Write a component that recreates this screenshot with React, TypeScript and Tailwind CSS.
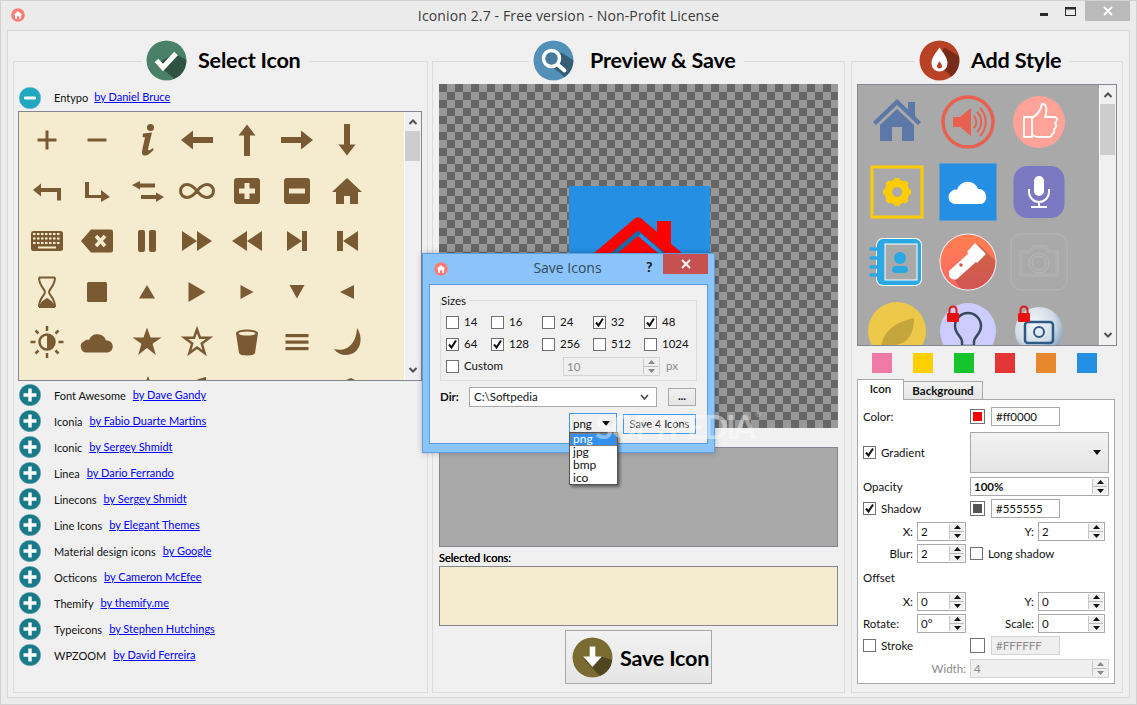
import React from "react";

const B = "#7a5a33";
const C = "#f5ebcf";

function P({ d }: { d: string }) {
  return <path d={d} fill={B} />;
}

const entypo: React.ReactNode[] = [
  <P d="M-1.5 -9.5h3v8h8v3h-8v8h-3v-8h-8v-3h8z" />,
  <P d="M-9.5 -1.5h19v3h-19z" />,
  <g fill={B}><circle cx="3.5" cy="-12.5" r="3.5" /><path d="M-4 -6.5L5 -7.5L1 9Q1 11 3 10L6 8L6.5 10Q1 16 -3 15.5Q-5.5 15 -5 11L-2 -2.5L-4.5 -3z" /></g>,
  <P d="M-16 0L-4 -9.5v6.5h20v6h-20v6.500z" />,
  <P d="M0 -15.500L8.500 -4.500h-5.500v20.500h-6v-20.500h-5.500z" />,
  <P d="M16 0L4 -9.500v6.500h-20v6h20v6.500z" />,
  <P d="M0 15.500L8.500 4.500h-5.500v-20.500h-6v20.500h-5.500z" />,

  <P d="M-14 -1L-6 -7.500v4.500H14V9.500H10V1H-6v4.500z" />,
  <P d="M-12 -9h4V4H4V-1L13 6L4 11V7H-12z" />,
  <g fill={B}><path d="M-15 -6L-7 -10V-7.500H8V-3.500H-7V-1.500z" /><path d="M17 6L9 11V8H-6V4H9V1.500z" /></g>,
  <path d="M0 0C-4 -5 -7 -6.500 -10 -6.500A6.500 6.500 0 0 0 -10 6.500C-7 6.500 -4 5 0 0C4 -5 7 -6.500 10 -6.500A6.500 6.500 0 0 1 10 6.500C7 6.500 4 5 0 0z" fill="none" stroke={B} strokeWidth="3" />,
  <g><rect x="-13" y="-13" width="26" height="26" rx="3" fill={B} /><path d="M-2.500 -8h5v5.500H8v5H2.500V8h-5V2.500H-8v-5h5.500z" fill={C} /></g>,
  <g><rect x="-13" y="-13" width="26" height="26" rx="3" fill={B} /><path d="M-8 -2.500H8v5H-8z" fill={C} /></g>,
  <P d="M0 -13L15 1H11V13H3V5H-3V13H-11V1H-15z" />,

  <g><rect x="-16" y="-10" width="32" height="20" rx="2.500" fill={B} /><path d="M-14 -7h28M-14 -2.500h28M-14 2h28" stroke={C} strokeWidth="2" strokeDasharray="2.500 1.500" /><path d="M-9 6.500h18" stroke={C} strokeWidth="2" /></g>,
  <g><path d="M-16 0L-6 -11.500H14a2 2 0 0 1 2 2V9.500a2 2 0 0 1 -2 2H-6z" fill={B} /><path d="M-1 -5L8 5M8 -5L-1 5" stroke={C} strokeWidth="3.500" /></g>,
  <g fill={B}><rect x="-9" y="-11" width="7" height="22" rx="2" /><rect x="2" y="-11" width="7" height="22" rx="2" /></g>,
  <P d="M-15 -10L0 0L-15 10zM0 -10L15 0L0 10z" />,
  <P d="M15 -10L0 0L15 10zM0 -10L-15 0L0 10z" />,
  <P d="M-10 -10L5 0L-10 10zM5 -10h5v20h-5z" />,
  <P d="M11 -10L-4 0L11 10zM-4 -10h-6v20h6z" />,

  <g><path d="M-8 -14.500H8M-8 15H8M-8 -14.500C-8 -6 -2 -3 -2 0C-2 3 -8 6 -8 15M8 -14.500C8 -6 2 -3 2 0C2 3 8 6 8 15" fill="none" stroke={B} strokeWidth="2" /><path d="M-8 15C-7 10 -2 7 0 6C2 7 7 10 8 15z" fill={B} /></g>,
  <rect x="-10" y="-10" width="20" height="20" rx="1.500" fill={B} />,
  <P d="M0 -7L8 6.500H-8z" />,
  <P d="M-8.500 -10L8.500 0L-8.500 10z" />,
  <P d="M-6.500 -7L6.500 0L-6.500 7z" />,
  <P d="M-7.500 -7H7.500L0 6.500z" />,
  <P d="M7 -7V7L-7 0z" />,

  <g fill={B}><circle cx="0" cy="0" r="7.500" fill="none" stroke={B} strokeWidth="2.500" /><path d="M0 -7.500A7.500 7.500 0 0 0 0 7.500z" transform="scale(-1 1)" /><path d="M0 -16V-11M0 11V16M-16.500 0H-11.500M11.500 0H16.500M-11.500 -11.500L-8.500 -8.500M8.500 8.500L11.500 11.500M11.500 -11.500L8.500 -8.500M-8.500 8.500L-11.500 11.500" stroke={B} strokeWidth="2.500" /></g>,
  <P d="M-9.500 10.500a6 6 0 0 1 -3 -11.500c1 -1 3 -1.500 4.500 -1a9 9 0 0 1 17 0.500a6 6 0 0 1 1.500 12z" />,
  <polygon fill={B} points="0,-14.500 3.500,-4.600 14.500,-4.600 5.600,1.800 8.800,13 0,6 -8.800,13 -5.600,1.800 -14.500,-4.600 -3.500,-4.600" />,
  <polygon fill="none" stroke={B} strokeWidth="2.500" points="0,-12.500 3,-4.200 12.500,-4.200 4.800,1.500 7.600,11 0,5.500 -7.600,11 -4.800,1.500 -12.500,-4.200 -3,-4.200" />,
  <g><path d="M-11 -9L-8 11Q-7 13.500 0 13.500Q7 13.500 8 11L11 -9z" fill={B} /><ellipse cx="0" cy="-9" rx="11" ry="3.500" fill={B} /><ellipse cx="0" cy="-8.500" rx="8.500" ry="2" fill={C} /></g>,
  <g fill={B}><rect x="-11.500" y="-8" width="23" height="3.200" /><rect x="-11.500" y="-1.500" width="23" height="3.200" /><rect x="-11.500" y="5" width="23" height="3.200" /></g>,
  <P d="M10 -14C18 -2 12 13 -1 13C-6 13 -10 11 -13 7C-3 10 9 5 10 -14z" />,

  <span />,
  <span />,
  <P d="M1 -17l2 5h-4z" />,
  <P d="M-3 -12q6 -3 12 -4v5h-12z" />,
  <span />,
  <P d="M-10 -11q5 -3 10 0v2h-10z" />,
  <P d="M-7 -12l6 -1l5 -2l6 3v4h-17z" />,
];

function Scrollbar({ thumbTop, thumbH }: { thumbTop: number; thumbH: number }) {
  return (
    <div className="w-[17px] shrink-0 self-stretch bg-[#f0f0f0] flex flex-col items-center border-l border-white">
      <svg width="16" height="19" viewBox="0 0 16 19" className="shrink-0">
        <path d="M4.500 12L8 8.500L11.500 12" fill="none" stroke="#505050" strokeWidth="2" />
      </svg>
      <div className="flex-1 w-full">
        <div className="w-[15px] bg-[#cdcdcd]" style={{ marginTop: thumbTop, height: thumbH }} />
      </div>
      <svg width="16" height="19" viewBox="0 0 16 19" className="shrink-0">
        <path d="M4.500 7L8 10.500L11.500 7" fill="none" stroke="#505050" strokeWidth="2" />
      </svg>
    </div>
  );
}

function Badge({ id, color, shadow, size = 41, children }: { id: string; color: string; shadow: string; size?: number; children: React.ReactNode }) {
  return (
    <svg width={size} height={size} viewBox="-20.500 -20.500 41 41" className="shrink-0">
      <defs>
        <clipPath id={id}>
          <circle r="20" />
        </clipPath>
      </defs>
      <circle r="20.400" fill="#ffffff" opacity="0.8" />
      <circle r="20" fill={color} />
      <g clipPath={`url(#${id})`}>
        <path d={shadow} fill="#000000" opacity="0.35" />
      </g>
      {children}
    </svg>
  );
}

function Legend({ children, title, gap, ml }: { children: React.ReactNode; title: string; gap: string; ml: string }) {
  return (
    <div className={`self-start ${ml} -mt-[22px] flex items-center h-[41px] bg-[#f0f0f0] px-[4px]`}>
      {children}
      <span className={`${gap} text-[21.600px] leading-none font-bold text-black pr-[4px] tracking-[-0.2px] whitespace-nowrap`}>{title}</span>
    </div>
  );
}

function PlusCircle({ minus }: { minus?: boolean }) {
  return (
    <svg width="22" height="22" viewBox="-11 -11 22 22" className="shrink-0">
      <circle r="10.800" fill={minus ? "#22a7c1" : "#197a89"} stroke="#9cc4cc" strokeWidth="0.400" />
      {minus ? (
        <rect x="-6" y="-1.500" width="12" height="3" rx="1.200" fill="#ffffff" />
      ) : (
        <path d="M-1.700 -6.500h3.400v4.800h4.800v3.400h-4.800v4.800h-3.400v-4.800h-4.800v-3.400h4.800z" fill="#ffffff" />
      )}
    </svg>
  );
}

function SetRow({ name, by, minus, labelGap = "ml-[7px]" }: { name: string; by: string; minus?: boolean; labelGap?: string }) {
  return (
    <div className="h-[26px] flex items-center pl-[5px] text-[11px]">
      <PlusCircle minus={minus} />
      <span className="ml-[13px] text-[#111] mt-[2px]">{name}</span>
      <span className={`${labelGap} text-[#0000ff] underline`}>{by}</span>
    </div>
  );
}

function Check({ checked, size = 13 }: { checked?: boolean; size?: number }) {
  return (
    <span className="inline-flex items-center justify-center shrink-0 bg-white border border-[#707070]" style={{ width: size, height: size }}>
      {checked && (
        <svg width="11" height="11" viewBox="0 0 11 11">
          <path d="M2 5.500L4.500 8.500L9 1.500" fill="none" stroke="#111" strokeWidth="2" />
        </svg>
      )}
    </span>
  );
}

function Spin({ value, w, disabled, bold }: { value: string; w: string; disabled?: boolean; bold?: boolean }) {
  const color = disabled ? "#8a8a8a" : "#111";
  return (
    <div className={`${w} h-[19px] shrink-0 flex items-stretch border ${disabled ? "border-[#d4d4d4] bg-[#efefef] text-[#8a8a8a]" : "border-[#a9a9a9] bg-white text-[#111]"} ${bold ? "font-bold" : ""}`}>
      <span className="flex-1 pl-[3px] leading-[17px]">{value}</span>
      <span className="w-[15px] my-[1px] mr-[1px] flex flex-col items-center justify-around bg-[#f0f0f0] border-l border-[#c8c8c8]">
        <svg width="7" height="4" viewBox="0 0 7 4"><path d="M0 4L3.500 0L7 4z" fill={color} /></svg>
        <span className="w-full h-px bg-[#bcbcbc]" />
        <svg width="7" height="4" viewBox="0 0 7 4"><path d="M0 0L3.500 4L7 0z" fill={color} /></svg>
      </span>
    </div>
  );
}

function ColorInput({ color, value, disabled }: { color: string; value: string; disabled?: boolean }) {
  return (
    <div className="flex items-center">
      <span className="w-[15px] h-[15px] border border-[#707070] p-[2px] bg-white">
        <span className="block w-full h-full" style={{ background: color }} />
      </span>
      <span className={`ml-[6px] w-[69px] h-[19px] pl-[4px] leading-[17px] border ${disabled ? "border-[#d4d4d4] bg-[#efefef] text-[#8a8a8a]" : "border-[#a9a9a9] bg-white text-[#111]"}`}>{value}</span>
    </div>
  );
}

function XY({ l, r, lv, rv, leftAlign, mt }: { l: string; r: string; lv: string; rv: string; leftAlign?: boolean; mt: string }) {
  return (
    <div className={`flex items-center h-[19px] ${mt}`}>
      <span className={`w-[50px] ${leftAlign ? "" : "text-right"}`}>{l}</span>
      <span className="w-[4px]" />
      <Spin value={lv} w="w-[49px]" />
      <span className="w-[72px] text-right pr-[4px]">{r}</span>
      <Spin value={rv} w="w-[67px]" />
    </div>
  );
}

function PaletteCell({ children }: { children: React.ReactNode }) {
  return (
    <div className="w-[71px] h-[70px] flex items-center justify-center">
      <svg width="70" height="70" viewBox="-35 -35 70 70">{children}</svg>
    </div>
  );
}

function Lock({ x, y }: { x: number; y: number }) {
  return (
    <g transform={`translate(${x} ${y})`}>
      <path d="M-3.500 -1V-4a3.500 3.500 0 0 1 7 0V-1" fill="none" stroke="#e01818" strokeWidth="2" />
      <rect x="-6" y="-1" width="12" height="9" rx="1" fill="#e81010" />
    </g>
  );
}

const SIZES: [string, boolean][] = [
  ["14", false], ["16", false], ["24", false], ["32", true], ["48", true],
  ["64", true], ["128", true], ["256", false], ["512", false], ["1024", false],
];

function HomeGlyph() {
  return (
    <svg width="14" height="14" viewBox="-7 -7 14 14" className="shrink-0">
      <circle r="6.800" fill="#ff7b74" />
      <path d="M0 -4L4.500 0H3V3.800H1V1.200H-1V3.800H-3V0H-4.500z" fill="#ffffff" />
    </svg>
  );
}

export default function App() {
  return (
    <div className="relative w-[1137px] h-[705px] overflow-hidden bg-[#ebebeb] [font-family:Lato,sans-serif] text-[11.500px] border border-[#d2d2d2]">
      {/* Title bar */}
      <div className="h-[29px] flex items-center relative">
        <span className="ml-[10px] mb-[1px]"><HomeGlyph /></span>
        <span className="flex-1 text-center [font-family:'Open_Sans',sans-serif] text-[14px] tracking-[0.13px] text-[#3b3b3b] ml-[-24px] mr-[0px] -mt-[1px]">Iconion 2.7 - Free version - Non-Profit License</span>
        <div className="absolute right-[6px] top-0 flex items-start">
          <svg width="55" height="20" viewBox="0 0 55 20" className="mr-0">
            <rect x="10" y="12" width="8" height="3" fill="#2a2a2a" />
            <rect x="35.500" y="6.500" width="10" height="8" fill="none" stroke="#2a2a2a" strokeWidth="1" />
            <rect x="35" y="6" width="11" height="2.500" fill="#2a2a2a" />
          </svg>
          <div className="w-[45px] h-[20px] bg-[#bababa] flex items-center justify-center">
            <svg width="10" height="10" viewBox="0 0 10 10"><path d="M1 1L9 9M9 1L1 9" stroke="#ffffff" strokeWidth="2" /></svg>
          </div>
        </div>
      </div>

      {/* Main frame */}
      <div className="ml-[6px] w-[1123px] h-[668px] bg-[#f0f0f0] border border-[#d8d8d8] pt-[30px] pl-[5px] flex items-start">
        {/* Select Icon */}
        <section className="w-[415px] h-[632px] border border-[#dcdcdc] flex flex-col">
          <Legend title="Select Icon" gap="ml-[11px]" ml="ml-[128px]">
            <Badge id="b1" color="#4a7f68" shadow="M-11 4L3 14L30 40L40 10L8 -7z">
              <path d="M-10 0L-3.500 7L9.500 -7" fill="none" stroke="#ffffff" strokeWidth="5" />
            </Badge>
          </Legend>
          <div className="mt-[5px] h-[23px] flex items-center"><SetRow name="Entypo" by="by Daniel Bruce" minus labelGap="ml-[6px]" /></div>
          <div className="mt-[2px] ml-[4px] w-[404px] h-[270px] shrink-0 border border-[#828790] bg-[#f5ebcf] flex overflow-hidden">
            <div className="flex-1 pl-[3px] pt-[3px] overflow-hidden">
              <div className="grid grid-cols-[repeat(7,50px)] auto-rows-[50.500px]">
                {entypo.map((ic, i) => (
                  <div key={i} className="w-[50px] h-[50px] flex items-center justify-center">
                    <svg width="50" height="50" viewBox="-25 -25 50 50" className="overflow-visible">{ic}</svg>
                  </div>
                ))}
              </div>
            </div>
            <Scrollbar thumbTop={0} thumbH={30} />
          </div>
          <div className="mt-[1px]">
            <SetRow name="Font Awesome" by="by Dave Gandy" />
            <SetRow name="Iconia" by="by Fabio Duarte Martins" />
            <SetRow name="Iconic" by="by Sergey Shmidt" />
            <SetRow name="Linea" by="by Dario Ferrando" />
            <SetRow name="Linecons" by="by Sergey Shmidt" />
            <SetRow name="Line Icons" by="by Elegant Themes" />
            <SetRow name="Material design icons" by="by Google" />
            <SetRow name="Octicons" by="by Cameron McEfee" />
            <SetRow name="Themify" by="by themify.me" />
            <SetRow name="Typeicons" by="by Stephen Hutchings" />
            <SetRow name="WPZOOM" by="by David Ferreira" />
          </div>
        </section>

        {/* Preview & Save */}
        <section className="ml-[4px] w-[413px] h-[632px] border border-[#dcdcdc] flex flex-col px-[6px]">
          <Legend title="Preview & Save" gap="ml-[16px]" ml="ml-[90px]">
            <Badge id="b2" color="#5390b8" shadow="M-7 2L7 13L30 35L35 10L8 -8z">
              <circle cx="-2" cy="-2" r="8" fill="#47799b" stroke="#ffffff" strokeWidth="3.500" />
              <path d="M4 4L11 10" stroke="#ffffff" strokeWidth="4" strokeLinecap="round" />
            </Badge>
          </Legend>
          <div className="mt-[3px] w-[399px] h-[344px] shrink-0 overflow-hidden flex justify-center pt-[102px] bg-[repeating-conic-gradient(#999999_0_25%,#666666_0_50%)] bg-[length:16px_16px]">
            <div className="w-[141px] h-[141px] ml-[2px] bg-[#2590e3]">
              <svg width="141" height="141" viewBox="0 0 141 141">
                <path d="M31 73L70 39L109 73" fill="none" stroke="#1a6aa8" strokeWidth="10" strokeLinejoin="round" transform="translate(2 2)" />
                <rect x="88" y="35" width="14" height="26" fill="#ff0000" />
                <path d="M29 71L69 37L109 71" fill="none" stroke="#ff0000" strokeWidth="11" strokeLinejoin="round" />
                <path d="M69 50L102 78V125H36V78z" fill="#ff0000" />
              </svg>
            </div>
          </div>
          <div className="mt-[19px] w-[399px] h-[100px] shrink-0 bg-[#a9a9a9] border border-[#828790]" />
          <div className="mt-[3px] h-[15px] leading-[15px] text-[11px] text-black [text-shadow:0_0_0.4px_#000]">Selected Icons:</div>
          <div className="mt-[1px] w-[399px] h-[60px] shrink-0 bg-[#f5ebcf] border border-[#828790]" />
          <button className="self-center mt-[4px] w-[147px] h-[54px] shrink-0 flex items-center pl-[6px] border border-[#a9a9a9] bg-gradient-to-b from-[#f2f2f2] to-[#e5e5e5]">
            <Badge id="b4" color="#7a6b30" shadow="M-9 1L3 14L30 40L40 10L9 -1z">
              <path d="M-2.800 -11h5.600v10h6.500L0 9.500L-9.300 -1h6.500z" fill="#ffffff" />
            </Badge>
            <span className="ml-[7px] mt-[3px] text-[21.600px] leading-none font-bold text-black tracking-[-0.2px] whitespace-nowrap">Save Icon</span>
          </button>
        </section>

        {/* Add Style */}
        <section className="ml-[6px] w-[272px] h-[632px] border border-[#dcdcdc] flex flex-col pl-[5px]">
          <Legend title="Add Style" gap="ml-[11px]" ml="ml-[58px]">
            <Badge id="b3" color="#b84226" shadow="M-7 5L7 11L30 35L35 5L5 -13z">
              <path d="M0 -13C4 -7 8 -3 8 3A8 8 0 0 1 -8 3C-8 -3 -4 -7 0 -13z" fill="#ffffff" />
              <path d="M0 1C1.500 3 2.500 4 2.500 5.500A2.500 2.500 0 0 1 -2.500 5.500C-2.500 4 -1.500 3 0 1z" fill="#b84226" />
            </Badge>
          </Legend>
          <div className="mt-[3px] w-[260px] h-[262px] shrink-0 border border-[#828790] bg-[#a9a9a9] flex overflow-hidden">
            <div className="flex-1 pl-[3px] pt-[2px] overflow-hidden">
              <div className="grid grid-cols-[repeat(3,71px)] auto-rows-[70px]">
                <PaletteCell>
                  <path d="M-24 0L0 -23L11 -12.500V-20H18V-6L24 0L21 3L0 -17L-21 3z" fill="#5b78a8" />
                  <path d="M0 -13L17 3V19H5V5H-5V19H-17V3z" fill="#5b78a8" />
                </PaletteCell>
                <PaletteCell>
                  <circle r="25" fill="none" stroke="#e8604f" strokeWidth="3.500" />
                  <path d="M-15 -5H-8L3 -14V14L-8 5H-15z" fill="#e8604f" />
                  <path d="M6 -6A9 9 0 0 1 6 6M9 -10A14 14 0 0 1 9 10M12 -14A20 20 0 0 1 12 14" fill="none" stroke="#e8604f" strokeWidth="2" />
                </PaletteCell>
                <PaletteCell>
                  <circle r="26" fill="#ffa398" />
                  <path d="M-15 -5H-7V15H-15zM-7 -4C-2 -7 2 -12 3 -18C7 -19 9 -13 6 -5H16C19 -4 18 0 16 1C18 3 17 6 15 7C16 9 15 12 13 12C13 15 11 15 8 15H-2L-7 13" fill="none" stroke="#ffffff" strokeWidth="1.800" strokeLinejoin="round" />
                </PaletteCell>
                <PaletteCell>
                  <rect x="-25" y="-25" width="50" height="50" fill="none" stroke="#ffcc00" strokeWidth="3" />
                  <circle r="9" fill="none" stroke="#ffcc00" strokeWidth="7" />
                  <path d="M0 -14V14M-14 0H14M-10 -10L10 10M10 -10L-10 10" stroke="#ffcc00" strokeWidth="5" />
                  <circle r="5" fill="#a9a9a9" />
                </PaletteCell>
                <PaletteCell>
                  <rect x="-28.500" y="-28.500" width="57" height="57" fill="#2590e3" />
                  <path d="M-13 12a7 7 0 0 1 -3 -13c1 -1 3 -2 5 -1a11 11 0 0 1 21 -1a8 8 0 0 1 4 15z" fill="#ffffff" />
                </PaletteCell>
                <PaletteCell>
                  <rect x="-25.500" y="-26" width="51" height="52" rx="14" fill="#7a78c0" />
                  <rect x="-5" y="-16" width="10" height="20" rx="5" fill="#ffffff" />
                  <path d="M-10 -3V0A10 10 0 0 0 10 0V-3M0 10V15M-8 15H8" fill="none" stroke="#ffffff" strokeWidth="2" />
                </PaletteCell>
                <PaletteCell>
                  <rect x="-21" y="-24" width="46" height="48" rx="7" fill="#ffffff" />
                  <rect x="-20" y="-23" width="44" height="46" rx="6" fill="#2aa8e3" />
                  <rect x="-12" y="-18" width="32" height="36" fill="#a9a9a9" stroke="#ffffff" strokeWidth="1" />
                  <circle cx="3" cy="-4" r="6" fill="#2aa8e3" />
                  <rect x="-5" y="4" width="16" height="7" rx="3.500" fill="#2aa8e3" />
                  <path d="M-26 -13H-16M-26 -4H-16M-26 5H-16M-26 13H-16" stroke="#2aa8e3" strokeWidth="3.500" strokeLinecap="round" />
                </PaletteCell>
                <PaletteCell>
                  <defs>
                    <linearGradient id="fl" x1="0" y1="0" x2="0" y2="1"><stop offset="0" stopColor="#ff7f50" /><stop offset="1" stopColor="#ff6868" /></linearGradient>
                    <clipPath id="flc"><circle r="27.500" /></clipPath>
                  </defs>
                  <circle r="28.500" fill="#ffffff" opacity="0.85" />
                  <circle r="27.500" fill="url(#fl)" />
                  <g clipPath="url(#flc)"><path d="M-18 12L10 -18L50 20L10 50z" fill="#000000" opacity="0.18" /></g>
                  <path d="M-19 9L1 -9L9 -1L-11 17Q-16 19 -19 14z" fill="#ffffff" />
                  <path d="M-1 -10L7 -19L18 -8L9 1z" fill="#ffffff" />
                  <circle cx="-7" cy="3" r="1.800" fill="#d85a50" />
                </PaletteCell>
                <PaletteCell>
                  <rect x="-28" y="-28" width="56" height="56" rx="10" fill="none" stroke="#b6b6b6" strokeWidth="1" />
                  <path d="M-19 -11H-9L-6 -16H7L10 -11H19V14H-19z" fill="none" stroke="#b6b6b6" strokeWidth="1" />
                  <path d="M-17 -9H-8L-5 -14H6L9 -9H17V12H-17z" fill="none" stroke="#b6b6b6" strokeWidth="0.800" />
                  <circle cy="1" r="10" fill="none" stroke="#b6b6b6" />
                  <circle cy="1" r="7" fill="none" stroke="#b6b6b6" />
                </PaletteCell>
                <PaletteCell>
                  <circle cy="-1" r="29" fill="#eec848" />
                  <path d="M-16 22C-17 7 -10 -8 17 -14C17 0 12 14 -6 13L-13 23z" fill="#c4a63c" />
                </PaletteCell>
                <PaletteCell>
                  <circle cy="-1" r="28" fill="#ccccff" />
                  <path d="M-6 14V9C-6 5 -13 2 -13 -6A13 13 0 0 1 13 -6C13 2 6 5 6 9V14z" fill="none" stroke="#3a4a5c" strokeWidth="2.500" />
                  <path d="M-6 17H6" stroke="#3a4a5c" strokeWidth="3" />
                  <Lock x={-15} y={-18} />
                </PaletteCell>
                <PaletteCell>
                  <defs>
                    <radialGradient id="cam" cx="0.400" cy="0.350" r="0.700"><stop offset="0" stopColor="#f4f6f8" /><stop offset="0.600" stopColor="#d2dde8" /><stop offset="1" stopColor="#7f9ab8" /></radialGradient>
                  </defs>
                  <circle cy="-1" r="24" fill="url(#cam)" />
                  <rect x="-14" y="-10" width="28" height="21" rx="3" fill="none" stroke="#2e5a8a" strokeWidth="2.500" />
                  <circle cy="0" r="5" fill="none" stroke="#2e5a8a" strokeWidth="2" />
                  <Lock x={-15} y={-18} />
                </PaletteCell>
              </div>
            </div>
            <Scrollbar thumbTop={0} thumbH={51} />
          </div>
          <div className="mt-[7px] flex gap-[21px] pl-[15px] h-[20px] shrink-0">
            <span className="w-[20px] h-[20px] bg-[#f07aa6]" />
            <span className="w-[20px] h-[20px] bg-[#ffd000]" />
            <span className="w-[20px] h-[20px] bg-[#16c42e]" />
            <span className="w-[20px] h-[20px] bg-[#e33535]" />
            <span className="w-[20px] h-[20px] bg-[#e8882c]" />
            <span className="w-[20px] h-[20px] bg-[#2590e3]" />
          </div>
          <div className="mt-[6px] h-[20px] flex items-end shrink-0">
            <div className="w-[47px] h-[21px] -mb-px z-10 bg-white border border-b-0 border-[#a9a9a9] text-center leading-[18px] font-semibold text-[#111]">Icon</div>
            <div className="w-[79px] h-[18px] bg-gradient-to-b from-[#f2f2f2] to-[#e5e5e5] border border-b-0 border-l-0 border-[#a9a9a9] text-center leading-[17px] font-bold text-[#111]">Background</div>
          </div>
          <div className="w-[258px] h-[285px] shrink-0 bg-white border border-[#a9a9a9] px-[5px] pt-[7px] text-[#111]">
            <div className="flex items-center h-[19px]">
              <span className="w-[107px]">Color:</span>
              <ColorInput color="#ff0000" value="#ff0000" />
            </div>
            <div className="flex items-center h-[41px] mt-[6px]">
              <span className="w-[107px] flex items-center gap-[5px]"><Check checked />Gradient</span>
              <span className="w-[139px] h-[41px] border border-[#a9a9a9] bg-gradient-to-b from-[#f2f2f2] to-[#e5e5e5] flex items-center justify-end pr-[7px]">
                <svg width="8" height="5" viewBox="0 0 8 5"><path d="M0 0H8L4 5z" fill="#111" /></svg>
              </span>
            </div>
            <div className="flex items-center h-[19px] mt-[4px]">
              <span className="w-[107px]">Opacity</span>
              <Spin value="100%" w="w-[139px]" bold />
            </div>
            <div className="flex items-center h-[19px] mt-[3px]">
              <span className="w-[107px] flex items-center gap-[5px]"><Check checked />Shadow</span>
              <ColorInput color="#555555" value="#555555" />
            </div>
            <XY l="X:" r="Y:" lv="2" rv="2" mt="mt-[4px]" />
            <div className="flex items-center h-[19px] mt-[3px]">
              <span className="w-[50px] text-right">Blur:</span>
              <span className="w-[4px]" />
              <Spin value="2" w="w-[49px]" />
              <span className="ml-[4px] flex items-center gap-[5px]"><Check />Long shadow</span>
            </div>
            <div className="h-[16px] mt-[7px] leading-[16px]">Offset</div>
            <XY l="X:" r="Y:" lv="0" rv="0" mt="mt-[6px]" />
            <XY l="Rotate:" r="Scale:" lv="0°" rv="0" leftAlign mt="mt-[3px]" />
            <div className="flex items-center h-[19px] mt-[3px]">
              <span className="w-[107px] flex items-center gap-[5px]"><Check />Stroke</span>
              <ColorInput color="#ffffff" value="#FFFFFF" disabled />
            </div>
            <div className="flex items-center h-[19px] mt-[4px]">
              <span className="w-[103px] pr-[0px] text-right text-[#8a8a8a]">Width:</span>
              <span className="w-[4px]" />
              <Spin value="4" w="w-[139px]" disabled />
            </div>
          </div>
        </section>
      </div>

      {/* Save Icons dialog */}
      <div className="absolute left-[421px] top-[252px] w-[293px] h-[200px] bg-[#8ac4fa] border border-[#5c9fdc] shadow-[0_0_6px_rgba(0,0,0,0.25)] flex flex-col">
        <div className="h-[30px] shrink-0 flex items-center relative pl-[11px]">
          <HomeGlyph />
          <span className="absolute left-0 right-[2px] top-[3px] text-center [font-family:'Open_Sans',sans-serif] text-[14px] text-[#34485c]">Save Icons</span>
          <span className="absolute left-[223px] top-[2px] text-[14px] font-bold text-[#111]">?</span>
          <div className="absolute right-[6px] top-0 w-[45px] h-[20px] bg-[#c75050] flex items-center justify-center">
            <svg width="10" height="10" viewBox="0 0 10 10"><path d="M1 1L9 9M9 1L1 9" stroke="#ffffff" strokeWidth="2" /></svg>
          </div>
        </div>
        <div className="mx-[6px] w-[279px] h-[160px] bg-[#f0f0f0] border border-[#5c9fdc] relative pl-[10px] pt-[15px] text-[#111] text-[11.500px]">
          <div className="w-[257px] h-[81px] border border-[#dcdcdc] relative pl-[5px] pt-[10px]">
            <span className="absolute left-[0px] -top-[7px] bg-[#f0f0f0] pr-[3px] leading-[14px]">Sizes</span>
            <div className="grid grid-cols-[45px_51px_51px_51px_60px] auto-rows-[22px]">
              {SIZES.map(([label, on]) => (
                <span key={label} className="flex items-center gap-[5px]"><Check checked={on} />{label}</span>
              ))}
              <span className="col-span-2 flex items-center gap-[5px]"><Check />Custom</span>
              <span className="col-span-3 flex items-center pl-[21px]">
                <Spin value="10" w="w-[97px]" disabled />
                <span className="ml-[6px] text-[#8a8a8a]">px</span>
              </span>
            </div>
          </div>
          <div className="mt-[6px] flex items-center h-[20px]">
            <span className="w-[29px] font-bold">Dir:</span>
            <span className="w-[188px] h-[20px] bg-white border border-[#a9a9a9] flex items-center justify-between pl-[4px] pr-[7px]">
              C:\Softpedia
              <svg width="9" height="6" viewBox="0 0 9 6"><path d="M1 1L4.500 5L8 1" fill="none" stroke="#555" strokeWidth="1.800" /></svg>
            </span>
            <span className="ml-[11px] w-[28px] h-[18px] border border-[#a9a9a9] bg-gradient-to-b from-[#f2f2f2] to-[#e5e5e5] text-center leading-[14px] font-bold">...</span>
          </div>
          <div className="mt-[6px] flex items-center">
            <span className="ml-[129px] w-[48px] h-[21px] border border-[#3f9be8] flex items-center justify-between pl-[3px] pr-[6px] bg-[#f0f0f0]">
              png
              <svg width="8" height="5" viewBox="0 0 8 5"><path d="M0 0H8L4 5z" fill="#111" /></svg>
            </span>
            <span className="ml-[6px] w-[73px] h-[20px] border border-[#3f9be8] bg-[#f0f0f0] text-center leading-[18px] text-[11px]">Save 4 Icons</span>
          </div>
        </div>
      </div>

      {/* Format dropdown */}
      <div className="absolute left-[568px] top-[431px] w-[49px] h-[53px] bg-white border border-[#555] shadow-[2px_2px_3px_rgba(0,0,0,0.45)] text-[#111] text-[12px]">
        <div className="bg-[#3390ee] text-white pl-[3px] h-[13px] leading-[11px] outline-1 -outline-offset-1 outline-dotted outline-[#c07020]">png</div>
        <div className="pl-[3px] h-[13px] leading-[11px]">jpg</div>
        <div className="pl-[3px] h-[13px] leading-[11px]">bmp</div>
        <div className="pl-[3px] h-[13px] leading-[11px]">ico</div>
      </div>

      {/* Softpedia watermark */}
      <div className="absolute left-[594px] top-[405px] flex items-start text-white opacity-40 pointer-events-none">
        <span className="text-[33px] leading-[40px] font-bold tracking-[-2.400px]">SOFTPEDIA</span>
        <span className="text-[8px] leading-[16px] ml-[1px]">®</span>
      </div>
    </div>
  );
}
